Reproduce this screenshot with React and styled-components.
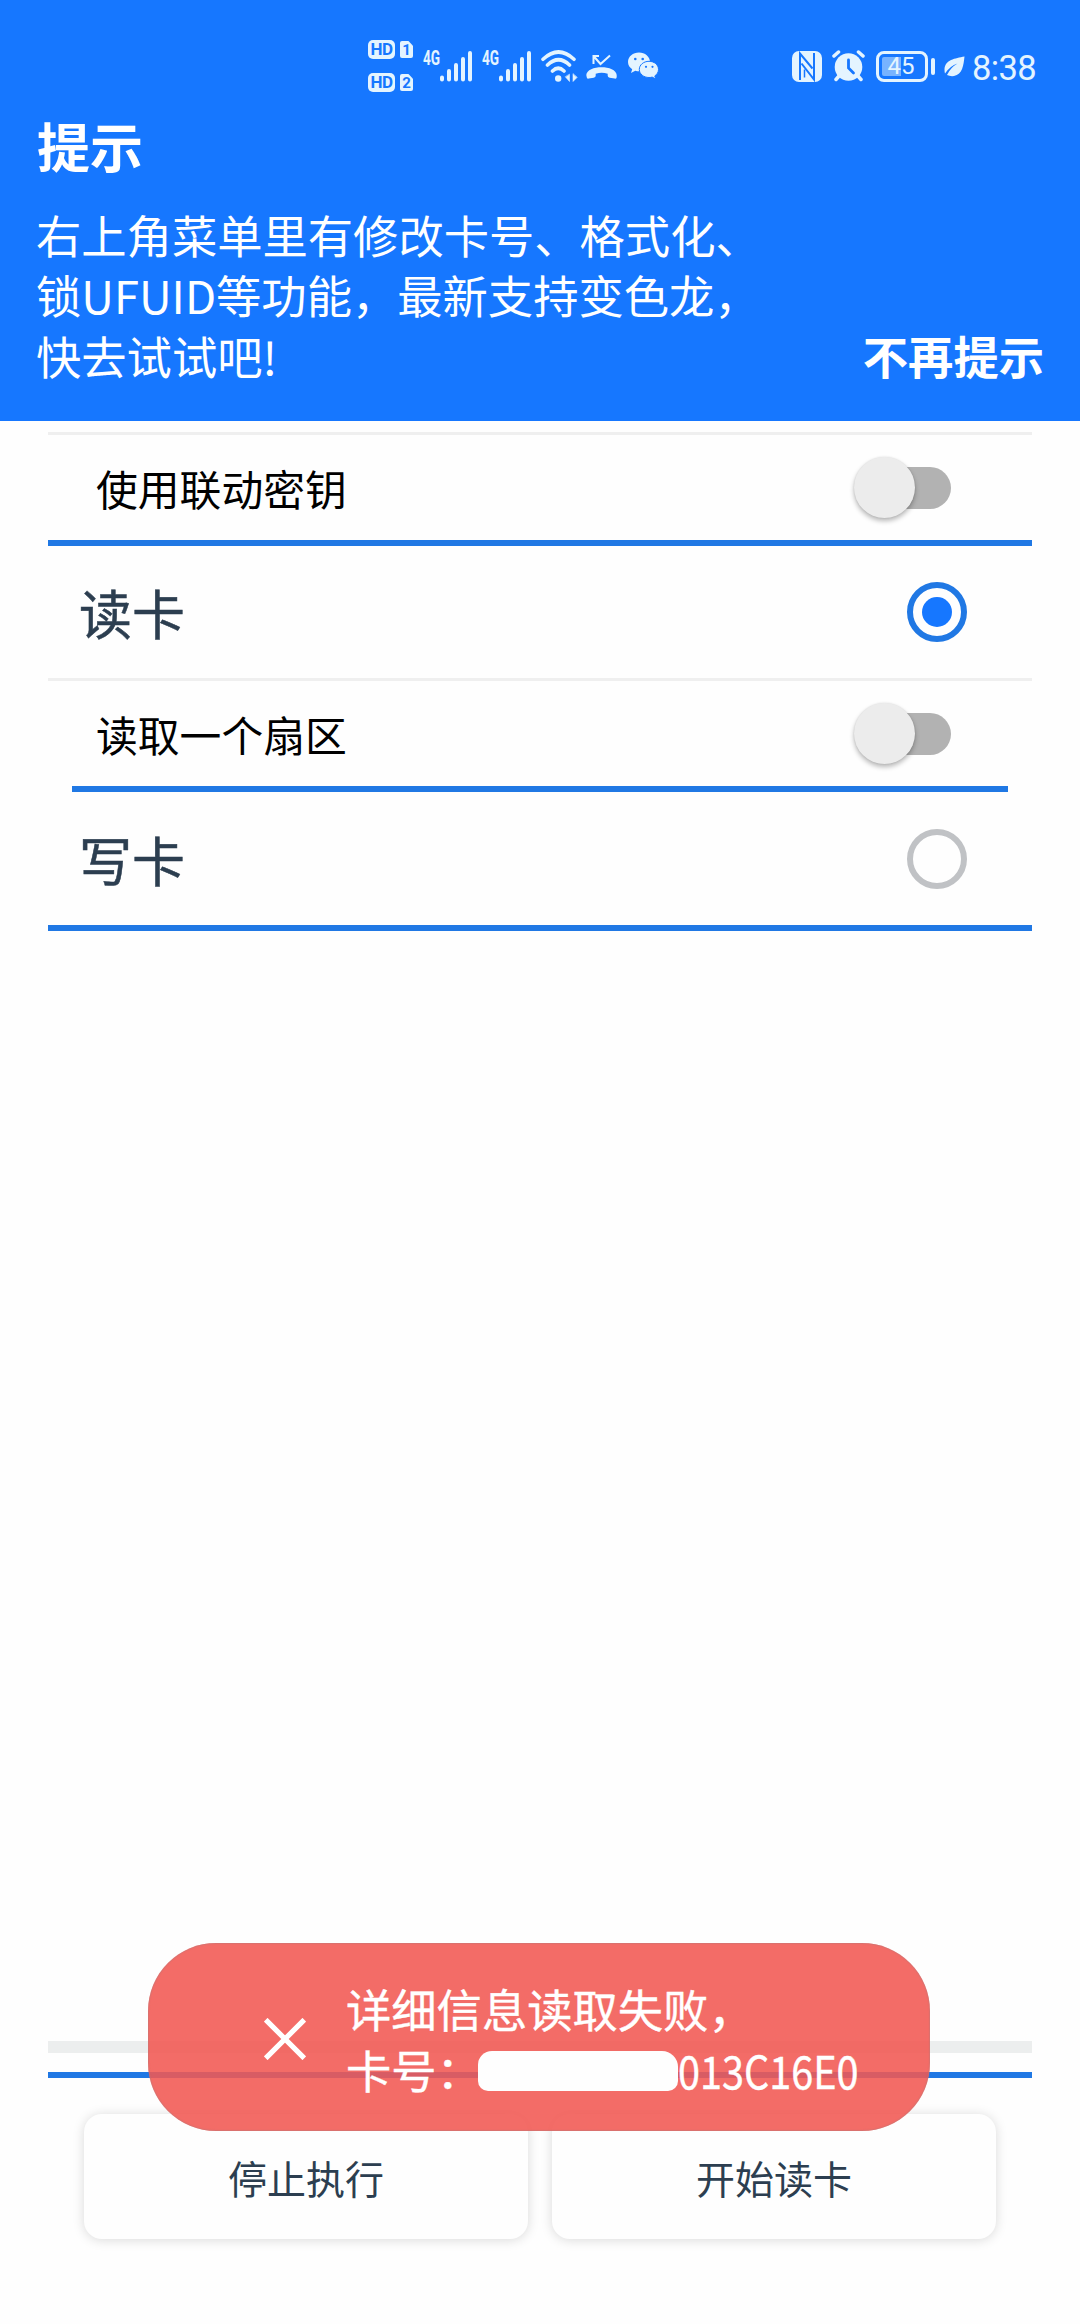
import React from 'react';
import styled, { createGlobalStyle } from 'styled-components';

const BLUE = '#1677ff';
const LINE_BLUE = '#2078e4';
const ICON = '#e4f4ff';

const GlobalStyle = createGlobalStyle`
  * { box-sizing: border-box; }
  body {
    margin: 0;
    background: #fefefe;
    font-family: "Noto Sans CJK SC", "Noto Sans", sans-serif;
  }
`;

const Screen = styled.main`
  position: relative;
  width: 1080px;
  height: 2324px;
  display: flex;
  flex-direction: column;
  overflow: hidden;
  background: #fefefe;
`;

const Header = styled.header`
  height: 421px;
  flex: none;
  background: ${BLUE};
  color: #fff;
`;

const StatusBar = styled.div`
  display: flex;
  align-items: center;
  height: 93px;
  padding: 39px 40px 0 368px;
  color: ${ICON};
`;

const StatusItem = styled.div`
  display: flex;
  align-items: center;
  margin-left: ${(p) => p.$gap || 0}px;
  svg { display: block; }
`;

const SimColumn = styled.div`
  display: flex;
  flex-direction: column;
  gap: 14px;
`;

const SimRow = styled.div`
  display: flex;
  align-items: center;
  gap: 5px;
`;

const HdBadge = styled.span`
  display: flex;
  align-items: center;
  justify-content: center;
  width: 27px;
  height: 19px;
  border-radius: 5px;
  background: ${ICON};
  color: ${BLUE};
  font: 700 17px/19px Roboto, sans-serif;
  letter-spacing: -0.5px;
`;

const SimCard = styled.span`
  width: 13px;
  height: 17px;
  border-radius: 2px;
  clip-path: polygon(0 0, 65% 0, 100% 28%, 100% 100%, 0 100%);
  background: ${ICON};
  color: ${BLUE};
  font: 700 15px/18px Roboto, sans-serif;
  text-align: center;
`;

const NetworkType = styled.span`
  width: 17px;
  height: 32px;
  font: 700 20px/16px Roboto, sans-serif;
  span {
    display: inline-block;
    transform: scaleX(0.68);
    transform-origin: left;
  }
`;

const Battery = styled.div`
  display: flex;
  align-items: center;
  gap: 3px;
`;

const BatteryBody = styled.div`
  width: 52px;
  height: 31px;
  padding: 3px;
  border: 3px solid ${ICON};
  border-radius: 8px;
  font: 400 24px/19px Roboto, sans-serif;
  text-align: center;
  text-indent: -2px;
  background: linear-gradient(90deg, #78b3ff 48%, transparent 48%) content-box;
`;

const BatteryTip = styled.i`
  width: 4px;
  height: 17px;
  border-radius: 2px;
  background: ${ICON};
`;

const Clock = styled.span`
  margin: 4px 0 0 7px;
  font: 400 34.5px/48px Roboto, sans-serif;
  letter-spacing: -0.6px;
  white-space: nowrap;
`;

const Title = styled.h1`
  margin: 22px 37px 0;
  font-size: 53px;
  line-height: 60px;
  font-weight: 700;
`;

const Notice = styled.div`
  display: flex;
  justify-content: space-between;
  align-items: flex-end;
  margin: 28.500px 36px 0;
  font-size: 45.3px;
  line-height: 60.6px;
  white-space: nowrap;
`;

const NoticeText = styled.p`
  margin: 0;
`;

const Dismiss = styled.strong`
  font-weight: 700;
`;

const Options = styled.section`
  display: flex;
  flex-direction: column;
  padding: 11px 48px 0;
`;

const Divider = styled.hr`
  flex: none;
  width: auto;
  height: ${(p) => p.$size || 6}px;
  margin: 0 ${(p) => p.$inset || 0}px;
  border: 0;
  background: ${(p) => (p.$muted ? '#efefef' : LINE_BLUE)};
`;

const SwitchRow = styled.div`
  display: flex;
  align-items: center;
  justify-content: space-between;
  height: 105px;
  padding: 0 81px 0 48px;
  font-size: 41.8px;
  line-height: 58px;
  color: #000;
`;

const ModeRow = styled.div`
  display: flex;
  align-items: center;
  justify-content: space-between;
  height: ${(p) => p.$height || 132}px;
  padding: 0 65px 0 31px;
  font-size: 53px;
  line-height: 74px;
  color: #2c3e50;
  -webkit-text-stroke: 0.5px #2c3e50;
`;

const Track = styled.span`
  display: flex;
  align-items: center;
  width: 84px;
  height: 42px;
  border-radius: 21px;
  background: #b2b2b2;
`;

const Thumb = styled.span`
  flex: none;
  width: 61px;
  height: 61px;
  margin-left: -13px;
  border-radius: 50%;
  background: #ececec;
  box-shadow: 0 3px 5px rgba(0, 0, 0, 0.28), 0 0 2px rgba(0, 0, 0, 0.1);
`;

const Radio = styled.span`
  display: flex;
  align-items: center;
  justify-content: center;
  width: 60px;
  height: 60px;
  border: 6px solid ${(p) => (p.$checked ? LINE_BLUE : '#c0c2c5')};
  border-radius: 50%;
`;

const RadioDot = styled.span`
  width: 30px;
  height: 30px;
  border-radius: 50%;
  background: ${BLUE};
`;

const Footer = styled.footer`
  display: flex;
  flex-direction: column;
  margin-top: auto;
  padding: 0 48px 85px;
`;

const ProgressTrack = styled.div`
  height: 12px;
  margin-bottom: 19px;
  background: #eceeee;
`;

const Actions = styled.div`
  display: flex;
  gap: 24px;
  padding: 36px 36px 0;
`;

const ActionButton = styled.button`
  flex: 1;
  height: 125px;
  padding: 0;
  border: 0;
  border-radius: 18px;
  background: #fefefe;
  box-shadow: 0 1px 12px rgba(0, 0, 0, 0.15);
  color: #2c3e50;
  font: 400 39px/58px "Noto Sans CJK SC", sans-serif;
`;

const Toast = styled.div`
  position: absolute;
  left: 148px;
  top: 1943px;
  width: 782px;
  height: 188px;
  display: flex;
  align-items: center;
  padding-left: 116px;
  border-radius: 68px;
  background: rgba(241, 88, 82, 0.88);
  box-shadow: inset 0 0 1px 1px rgba(190, 120, 120, 0.5);
  color: #fff;
  svg { flex: none; margin-top: 3px; }
`;

const ToastText = styled.div`
  margin: 4px 0 0 40px;
  font-size: 45.3px;
  line-height: 60.6px;
  white-space: nowrap;
  -webkit-text-stroke: 0.4px #fff;
`;

const ToastLine = styled.div`
  display: flex;
  align-items: center;
`;

const Redaction = styled.span`
  width: 200px;
  height: 40px;
  margin: 3px 0 0 -4px;
  border-radius: 14px 16px 10px 10px;
  background: #fefefe;
`;

const CardNumber = styled.span`
  transform: scaleX(0.875);
  transform-origin: left;
`;

const Signal = () => (
  <svg width="32" height="32" viewBox="0 0 32 32" stroke={ICON} strokeWidth="4" strokeLinecap="round">
    <path d="M2 27.500v2M9 21v8.500M16 15v14.500M23 9v20.500M30 3v26.500" />
  </svg>
);

const Wifi = () => (
  <svg width="37" height="32" viewBox="0 0 37 32" fill="none" stroke={ICON} strokeWidth="3.600" strokeLinecap="round">
    <path d="M2 9.300Q17.500-5.300 33 9.300M6.500 15Q17.500 4.500 28.500 15M11.500 21Q17.200 15.500 23 21" />
    <circle cx="17.200" cy="28.500" r="3.200" fill={ICON} stroke="none" />
    <path d="M28.500 24.500v7l-4-4.500zM32 24v7.500l4-4z" fill={ICON} strokeWidth="0.600" />
  </svg>
);

const MissedCall = () => (
  <svg width="31" height="32" viewBox="0 0 31 32" fill="none" stroke={ICON} strokeWidth="2">
    <path d="M7.500 14V6H13M7.500 6l7 8L24 5.500" />
    <path
      d="M.3 25C1 14.500 30 14.500 30.700 25v2q0 2-2 1.600l-5-.9q-2-.4-2-2v-2q-6-1.800-12 0v2q0 1.600-2 2l-5 .9q-2 .4-2-1.600z"
      fill={ICON}
      stroke="none"
    />
  </svg>
);

const WeChat = () => (
  <svg width="31" height="32" viewBox="0 0 31 32">
    <path d="M11 2.500C5 2.500 0 6.600 0 12c0 3 1.700 5.600 4.200 7.300L3 23l4.300-2.200c1.200.4 2.400.5 3.700.5 6 0 11-4.200 11-9.400s-5-9.400-11-9.400z" fill={ICON} />
    <path d="M21 11.300c-5.400 0-9.700 3.600-9.700 8.100s4.300 8.100 9.700 8.100c1.100 0 2.200-.1 3.200-.4l3.600 2-1-3.200c2.300-1.500 3.700-3.800 3.700-6.500 0-4.500-4.200-8.100-9.500-8.100z" fill={ICON} stroke={BLUE} strokeWidth="1" />
    <g fill={BLUE}>
      <circle cx="7.300" cy="9" r="1.300" />
      <circle cx="14.700" cy="9" r="1.300" />
      <circle cx="18" cy="16.800" r="1.100" />
      <circle cx="24.500" cy="16.800" r="1.100" />
    </g>
  </svg>
);

const Nfc = () => (
  <svg width="30" height="31" viewBox="0 0 30 31">
    <rect width="30" height="31" rx="7" fill={ICON} />
    <path d="M8 29V2.500L20.500 17.500M22 2v26.500L9.500 12.500" fill="none" stroke={BLUE} strokeWidth="2" />
    <path d="M12.500 18.500v8" fill="none" stroke={BLUE} strokeWidth="1.500" />
  </svg>
);

const Alarm = () => (
  <svg width="33" height="32" viewBox="0 0 33 32" fill="none" stroke={ICON} strokeWidth="3.500" strokeLinecap="round">
    <circle cx="16.500" cy="17" r="13.800" fill={ICON} stroke="none" />
    <path d="M2 6l4.500-4M31 6l-4.500-4M7 26l-3 3.500M26 26l3 3.500" />
    <path d="M16.500 10v8l5 5" stroke={BLUE} strokeWidth="2.800" />
  </svg>
);

const Leaf = () => (
  <svg width="21" height="21" viewBox="0 0 21 21">
    <path d="M20.500.5C11 2.500 1 3.500.5 13.500q0 2.500.5 4Q6 10 13.500 7.500 6.500 11.500 3 19q3 1.500 7 1C18.500 18.500 19.500 9 20.500.5z" fill={ICON} />
  </svg>
);

const Cross = () => (
  <svg width="42" height="42" viewBox="0 0 42 42" stroke="#fff" strokeWidth="5.200">
    <path d="M1.700 1.700l38.600 38.600M40.300 1.700L1.700 40.300" />
  </svg>
);

const Switch = () => (
  <Track>
    <Thumb />
  </Track>
);

export default function App() {
  return (
    <Screen>
      <GlobalStyle />
      <Header>
        <StatusBar>
          <SimColumn>
            <SimRow><HdBadge>HD</HdBadge><SimCard>1</SimCard></SimRow>
            <SimRow><HdBadge>HD</HdBadge><SimCard>2</SimCard></SimRow>
          </SimColumn>
          <StatusItem $gap={10}><NetworkType><span>4G</span></NetworkType><Signal /></StatusItem>
          <StatusItem $gap={10}><NetworkType><span>4G</span></NetworkType><Signal /></StatusItem>
          <StatusItem $gap={10}><Wifi /></StatusItem>
          <StatusItem $gap={8}><MissedCall /></StatusItem>
          <StatusItem $gap={11}><WeChat /></StatusItem>
          <StatusItem $gap={133}><Nfc /></StatusItem>
          <StatusItem $gap={10}><Alarm /></StatusItem>
          <StatusItem $gap={11}>
            <Battery><BatteryBody>45</BatteryBody><BatteryTip /></Battery>
          </StatusItem>
          <StatusItem $gap={9}><Leaf /></StatusItem>
          <Clock>8:38</Clock>
        </StatusBar>
        <Title>提示</Title>
        <Notice>
          <NoticeText>
            右上角菜单里有修改卡号、格式化、<br />
            锁UFUID等功能，最新支持变色龙，<br />
            快去试试吧!
          </NoticeText>
          <Dismiss>不再提示</Dismiss>
        </Notice>
      </Header>

      <Options>
        <Divider $muted $size={3} />
        <SwitchRow>使用联动密钥<Switch /></SwitchRow>
        <Divider />
        <ModeRow>读卡<Radio $checked><RadioDot /></Radio></ModeRow>
        <Divider $muted $size={3} />
        <SwitchRow>读取一个扇区<Switch /></SwitchRow>
        <Divider $inset={24} />
        <ModeRow $height={133}>写卡<Radio /></ModeRow>
        <Divider />
      </Options>

      <Footer>
        <ProgressTrack />
        <Divider />
        <Actions>
          <ActionButton>停止执行</ActionButton>
          <ActionButton>开始读卡</ActionButton>
        </Actions>
      </Footer>

      <Toast>
        <Cross />
        <ToastText>
          <ToastLine>详细信息读取失败，</ToastLine>
          <ToastLine>卡号：<Redaction /><CardNumber>013C16E0</CardNumber></ToastLine>
        </ToastText>
      </Toast>
    </Screen>
  );
}
